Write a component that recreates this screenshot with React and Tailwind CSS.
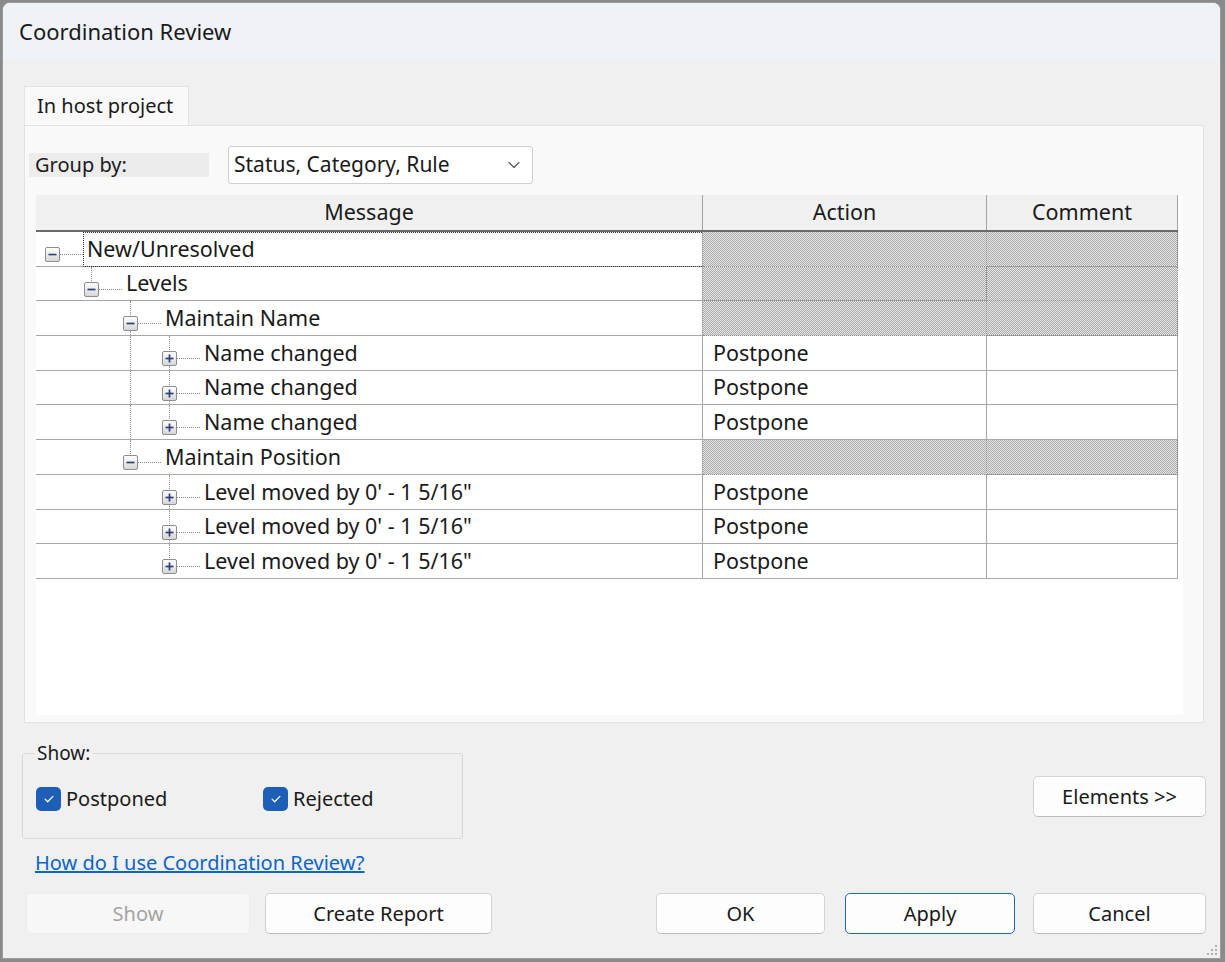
import React from 'react';
import { ChevronDown } from 'lucide-react';

const rows = [
  { level: 0, text: 'New/Unresolved', open: true, group: true, focus: true, up: false, down: false, through: [] },
  { level: 1, text: 'Levels', open: true, group: true, up: true, down: false, through: [] },
  { level: 2, text: 'Maintain Name', open: true, group: true, up: true, down: true, through: [] },
  { level: 3, text: 'Name changed', action: 'Postpone', up: true, down: true, through: [2] },
  { level: 3, text: 'Name changed', action: 'Postpone', up: true, down: true, through: [2] },
  { level: 3, text: 'Name changed', action: 'Postpone', up: true, down: false, through: [2] },
  { level: 2, text: 'Maintain Position', open: true, group: true, up: true, down: false, through: [] },
  { level: 3, text: 'Level moved by 0\' - 1 5/16"', action: 'Postpone', up: true, down: true, through: [] },
  { level: 3, text: 'Level moved by 0\' - 1 5/16"', action: 'Postpone', up: true, down: true, through: [] },
  { level: 3, text: 'Level moved by 0\' - 1 5/16"', action: 'Postpone', up: true, down: false, through: [] },
];

const indent = ['pl-[9px]', 'pl-[48px]', 'pl-[87px]', 'pl-[126px]'];
const lineLeft = ['left-[16px]', 'left-[55px]', 'left-[94px]', 'left-[133px]'];

const hatch = 'bg-[image:repeating-conic-gradient(#ababab_0%_25%,#e6e6e6_0%_50%)] bg-[length:2px_2px]';

const Expander = ({ open }) => (
  <div className="relative z-10 mt-[15px] flex h-[15px] w-[15px] shrink-0 items-center justify-center self-start rounded-[2px] border border-[#8e8e8e] bg-gradient-to-b from-white to-[#d6d6d6]">
    <svg viewBox="0 0 13 13" className="h-[13px] w-[13px]">
      <path d="M2.5 6.5h8" stroke="#2b3f7a" strokeWidth="1.7" />
      {!open && <path d="M6.5 2.5v8" stroke="#2b3f7a" strokeWidth="1.7" />}
    </svg>
  </div>
);

const Button = ({ children, className = '', disabled, primary }) => (
  <button
    className={
      'flex h-[41px] items-center justify-center rounded-[5px] text-[20px] ' +
      (disabled
        ? 'border border-[#ededed] bg-[#f7f7f7] text-[#a3a3a3] '
        : primary
        ? 'border-[1.5px] border-[#1f68c0] bg-[#fdfdfd] text-[#1a1a1a] '
        : 'border border-[#d3d3d3] border-b-[#bcbcbc] bg-[#fdfdfd] text-[#1a1a1a] ') +
      className
    }
  >
    {children}
  </button>
);

const Checkbox = ({ label, className = '' }) => (
  <div className={'flex items-center gap-[5px] ' + className}>
    <div className="flex h-[24px] w-[25px] items-center justify-center rounded-[5px] bg-[#1d5fb6]">
      <svg viewBox="0 0 16 16" className="h-[14px] w-[14px]">
        <path d="M3.5 8.2l3 3 6-6.2" fill="none" stroke="white" strokeWidth="1.4" strokeLinecap="round" strokeLinejoin="round" />
      </svg>
    </div>
    <span className="text-[20px] text-[#1a1a1a]">{label}</span>
  </div>
);

export default function App() {
  return (
    <div className="h-[962px] w-[1225px] overflow-hidden bg-[#8a8a8a] font-['Noto_Sans',sans-serif] text-[#1a1a1a]">
      <div className="relative ml-[2px] mt-[2px] flex h-[957px] w-[1219px] flex-col overflow-hidden rounded-t-[8px] border border-[#9c9c9c] bg-[#f0f0f0]">
        {/* title bar */}
        <div className="flex h-[57px] shrink-0 items-center bg-[#eff3f8] pl-[16px] text-[22px]">Coordination Review</div>

        {/* tabs */}
        <div className="mt-[26px] pl-[21px]">
          <div className="flex h-[39px] w-[165px] items-center border border-b-0 border-[#e4e4e4] bg-[#f9f9f9] pl-[12px] text-[20px]">
            In host project
          </div>
        </div>
        <div className="ml-[21px] mr-[16px] flex h-[598px] flex-col border border-[#e2e2e2] bg-[#f9f9f9] pb-[7px] pr-[20px] pt-[20px]">
          <div className="flex items-center">
            <div className="ml-[4px] flex h-[24px] w-[180px] items-center bg-[#ececec] pl-[6px] text-[20px]">Group by:</div>
            <div className="ml-[19px] flex h-[38px] w-[305px] items-center justify-between rounded-[3px] border border-[#cfcfcf] bg-white pl-[5px] pr-[8px] text-[21px]">
              <span>Status, Category, Rule</span>
              <ChevronDown size={20} strokeWidth={1.3} color="#555" />
            </div>
          </div>

          {/* grid */}
          <div className="ml-[11px] mt-[11px] flex-1 bg-white">
            <div className="grid h-[37px] w-[1142px] grid-cols-[667px_284px_191px] border-b-2 border-[#6a6a6a] bg-[#f0f0f0] text-[21.5px]">
              <div className="flex items-center justify-center border-r border-[#a3a3a3]">Message</div>
              <div className="flex items-center justify-center border-r border-[#a3a3a3]">Action</div>
              <div className="flex items-center justify-center border-r border-[#a3a3a3]">Comment</div>
            </div>
            {rows.map((r, i) => (
              <div key={i} className="grid h-[34.7px] grid-cols-[667px_284px_191px] text-[21.5px]">
                <div className={'relative flex border-b border-r border-[#a8a8a8] ' + indent[r.level]}>
                  {r.through.map((l) => (
                    <span key={l} className={'absolute bottom-0 top-0 border-l border-dotted border-[#9a9a9a] ' + lineLeft[l]} />
                  ))}
                  {r.up && <span className={'absolute top-0 h-[16px] border-l border-dotted border-[#9a9a9a] ' + lineLeft[r.level]} />}
                  {r.down && <span className={'absolute bottom-0 top-[30px] border-l border-dotted border-[#9a9a9a] ' + lineLeft[r.level]} />}
                  <Expander open={r.open} />
                  <div className="mt-[22px] w-[23px] shrink-0 self-start border-t border-dotted border-[#8a8a8a]" />
                  {r.focus ? (
                    <div className="-mb-px flex flex-1 items-center border border-r-0 border-dotted border-[#333] pl-[3px]">{r.text}</div>
                  ) : (
                    <div className="flex items-center pl-[4px]">{r.text}</div>
                  )}
                </div>
                {r.group ? (
                  <>
                    <div className={'border-b border-r border-dotted border-[#888] ' + hatch} />
                    <div className={'border-b border-r border-dotted border-[#888] ' + hatch} />
                  </>
                ) : (
                  <>
                    <div className="flex items-center border-b border-r border-[#a8a8a8] pl-[10px]">{r.action}</div>
                    <div className="border-b border-r border-[#a8a8a8]" />
                  </>
                )}
              </div>
            ))}
          </div>
        </div>

        {/* bottom area */}
        <div className="flex items-start">
          <fieldset className="ml-[19px] mt-[17px] h-[99px] w-[441px] rounded-[3px] border border-[#d9d9d9]">
            <legend className="ml-[11px] px-[3px] text-[19px] leading-[27px]">Show:</legend>
            <div className="mt-[17px] flex pl-[13px]">
              <Checkbox label="Postponed" className="w-[227px]" />
              <Checkbox label="Rejected" />
            </div>
          </fieldset>
          <Button className="ml-auto mr-[14px] mt-[53px] w-[173px]">Elements &gt;&gt;</Button>
        </div>

        <a href="#" className="ml-[32px] mt-[11px] self-start text-[20px] leading-[26px] text-[#0a66c7] underline">
          How do I use Coordination Review?
        </a>

        <div className="mt-[17px] flex">
          <Button disabled className="ml-[23px] w-[224px]">Show</Button>
          <Button className="ml-[15px] w-[227px]">Create Report</Button>
          <Button className="ml-auto w-[169px]">OK</Button>
          <Button primary className="ml-[20px] w-[170px]">Apply</Button>
          <Button className="ml-[18px] mr-[14px] w-[173px]">Cancel</Button>
        </div>

        {/* resize grip */}
        <svg className="absolute bottom-[2px] right-[2px] h-[14px] w-[14px]" viewBox="0 0 14 14">
          {[[11, 3], [11, 7], [7, 7], [11, 11], [7, 11], [3, 11]].map(([x, y], k) => (
            <rect key={k} x={x} y={y} width="2" height="2" fill="#b0b0b0" />
          ))}
        </svg>
      </div>
    </div>
  );
}
